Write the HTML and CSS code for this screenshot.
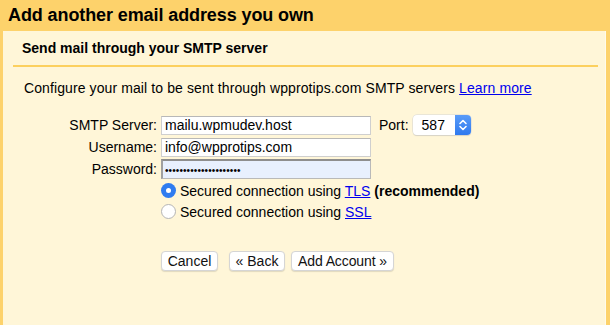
FILE: index.html
```html
<!DOCTYPE html>
<html>
<head>
<meta charset="utf-8">
<link rel="stylesheet" href="styles.css">
</head>
<body>
<div class="header"><h1 class="title">Add another email address you own</h1></div>
<div class="panel">
  <h2 class="sub">Send mail through your SMTP server</h2>
  <p class="intro">Configure your mail to be sent through wpprotips.com SMTP servers <a href="#" class="link">Learn more</a></p>
  <div class="form">
    <div class="label">SMTP Server:</div>
    <div class="field">
      <div class="input">mailu.wpmudev.host</div>
      <span class="port-label">Port:</span>
      <div class="select"><span class="select-value">587</span><span class="select-arrow"><svg width="10" height="14" viewBox="0 0 10 14"><path d="M2 5.5 L5 2.5 L8 5.5 M2 8.5 L5 11.5 L8 8.5" fill="none" stroke="#fff" stroke-width="1.6" stroke-linecap="round" stroke-linejoin="round"/></svg></span></div>
    </div>
    <div class="label">Username:</div>
    <div class="field"><div class="input">info@wpprotips.com</div></div>
    <div class="label">Password:</div>
    <div class="field"><div class="input focused"><span class="dots">•••••••••••••••••••••</span></div></div>
  </div>
  <div class="options">
    <div class="option"><span class="radio checked"></span><span>Secured connection using <a href="#" class="link">TLS</a> <b>(recommended)</b></span></div>
    <div class="option"><span class="radio"></span><span>Secured connection using <a href="#" class="link">SSL</a></span></div>
  </div>
  <div class="actions">
    <button class="btn cancel">Cancel</button>
    <button class="btn back">« Back</button>
    <button class="btn add">Add Account »</button>
  </div>
</div>
</body>
</html>
```
FILE: styles.css
```css
html, body {
  margin: 0;
  padding: 0;
  height: 100%;
  overflow: hidden;
}
body {
  font-family: "Liberation Sans", Arial, sans-serif;
  color: #000;
  background: #fdd26b;
}
.header {
  height: 31px;
  background: #fdd26b;
  padding-left: 8px;
}
.title {
  margin: 0;
  font-size: 18px;
  font-weight: bold;
  line-height: 31px;
  letter-spacing: -0.1px;
}
.panel {
  margin-left: 3px;
  margin-right: 4px;
  background: #fff6d8;
  box-shadow: inset -1px 0 0 #fffbea;
  height: 400px;
  padding-top: 9px;
}
.sub {
  margin: 0 8px 0 10px;
  padding: 0 0 8px 9px;
  font-size: 14px;
  line-height: 17px;
  font-weight: bold;
  border-bottom: 2px solid #fcd05e;
}
.intro {
  margin: 13px 0 0 21px;
  font-size: 14px;
  line-height: 17px;
  letter-spacing: 0.1px;
}
.link {
  color: #0000ee;
  text-decoration: underline;
}
.form {
  display: grid;
  grid-template-columns: 154px auto;
  column-gap: 4px;
  grid-auto-rows: 22px;
  margin-top: 17px;
  font-size: 14px;
}
.label {
  text-align: right;
  align-self: center;
}
.field {
  display: flex;
  align-items: center;
}
.input {
  box-sizing: border-box;
  width: 210px;
  height: 19px;
  border: 1px solid #cfcfcf;
  border-top-color: #b8b8b8;
  background: #fff;
  padding-left: 3px;
  line-height: 17px;
  font-size: 14px;
}
.input.focused {
  height: 20px;
  border: 1px solid #b9b9b9;
  border-top: 2px solid #8e8e8e;
  border-left: 2px solid #a0a0a0;
  background: #e8f0fe;
  line-height: 16px;
  padding-left: 2px;
}
.dots {
  font-size: 10px;
  letter-spacing: 0.1px;
}
.port-label {
  margin-left: 8px;
}
.select {
  margin-left: 4px;
  display: flex;
  box-sizing: border-box;
  width: 58px;
  height: 20px;
  border-radius: 4px;
  background: #fff;
  box-shadow: 0 0 0 0.5px #d6d6d6, 0 1px 1px rgba(0,0,0,0.15);
  overflow: hidden;
}
.select-value {
  flex: 1;
  padding-left: 9px;
  line-height: 20px;
}
.select-arrow {
  width: 16px;
  background: linear-gradient(#5a9cf8, #2f79ef);
  display: flex;
  align-items: center;
  justify-content: center;
}
.options {
  margin-left: 158px;
  font-size: 14px;
}
.option {
  display: flex;
  align-items: center;
  height: 21px;
}
.radio {
  box-sizing: border-box;
  width: 15px;
  height: 15px;
  border-radius: 50%;
  border: 1px solid #b5b5b5;
  background: #fff;
  margin-right: 4px;
  position: relative;
}
.radio.checked {
  border: none;
  background: #2f7cf0;
}
.radio.checked::after {
  content: "";
  position: absolute;
  left: 5px;
  top: 5px;
  width: 5px;
  height: 5px;
  border-radius: 50%;
  background: #fff;
}
.actions {
  margin: 29px 0 0 158px;
  display: flex;
  gap: 6px;
}
.btn {
  font-family: "Liberation Sans", Arial, sans-serif;
  font-size: 14px;
  height: 20px;
  line-height: 18px;
  padding: 0;
  text-align: center;
  background: #fff;
  border: 1px solid #d5d5d5;
  border-radius: 4px;
  box-shadow: 0 1px 1px rgba(0,0,0,0.12);
  color: #111;
}
.btn.cancel {
  width: 57px;
}
.btn.back {
  width: 56px;
  margin-left: 5px;
}
.btn.add {
  width: 103px;
  letter-spacing: -0.1px;
}
```
